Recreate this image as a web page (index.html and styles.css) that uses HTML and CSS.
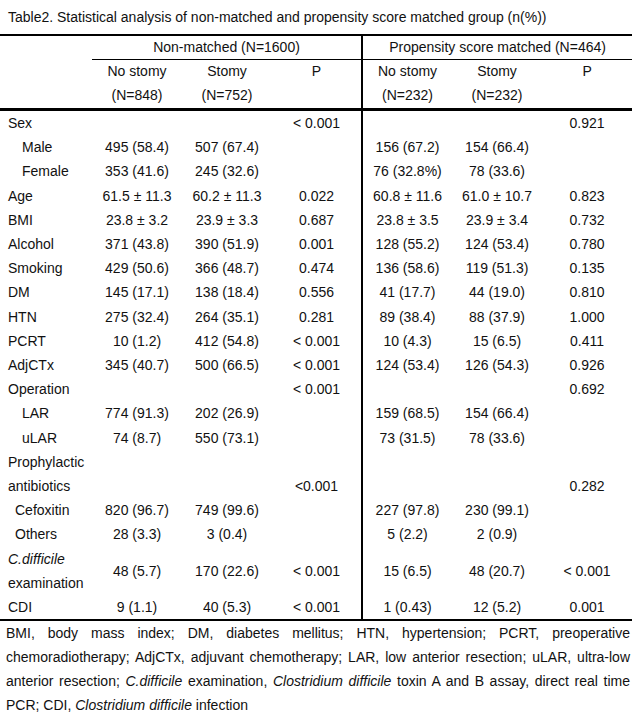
FILE: index.html
```html
<!DOCTYPE html>
<html>
<head>
<meta charset="utf-8">
<link rel="stylesheet" href="styles.css">
</head>
<body>
<div class="page">
  <div class="title">Table2. Statistical analysis of non-matched and propensity score matched group (n(%))</div>
  <table class="tbl">
    <colgroup>
      <col class="c-label"><col class="c-val"><col class="c-val"><col class="c-val"><col class="c-val"><col class="c-val"><col class="c-val">
    </colgroup>
    <thead>
      <tr class="h1">
        <th class="lbl"></th>
        <th colspan="3" class="grp sep">Non-matched (N=1600)</th>
        <th colspan="3" class="grp">Propensity score matched (N=464)</th>
      </tr>
      <tr class="h2">
        <th class="lbl"></th>
        <th>No stomy</th><th>Stomy</th><th class="sep">P</th>
        <th>No stomy</th><th>Stomy</th><th>P</th>
      </tr>
      <tr class="h3">
        <th class="lbl"></th>
        <th>(N=848)</th><th>(N=752)</th><th class="sep"></th>
        <th>(N=232)</th><th>(N=232)</th><th></th>
      </tr>
    </thead>
    <tbody>
      <tr><td class="lbl">Sex</td><td></td><td></td><td class="sep">&lt; 0.001</td><td></td><td></td><td>0.921</td></tr>
      <tr><td class="lbl in2">Male</td><td>495 (58.4)</td><td>507 (67.4)</td><td class="sep"></td><td>156 (67.2)</td><td>154 (66.4)</td><td></td></tr>
      <tr><td class="lbl in2">Female</td><td>353 (41.6)</td><td>245 (32.6)</td><td class="sep"></td><td>76 (32.8%)</td><td>78 (33.6)</td><td></td></tr>
      <tr><td class="lbl">Age</td><td>61.5 ± 11.3</td><td>60.2 ± 11.3</td><td class="sep">0.022</td><td>60.8 ± 11.6</td><td>61.0 ± 10.7</td><td>0.823</td></tr>
      <tr><td class="lbl">BMI</td><td>23.8 ± 3.2</td><td>23.9 ± 3.3</td><td class="sep">0.687</td><td>23.8 ± 3.5</td><td>23.9 ± 3.4</td><td>0.732</td></tr>
      <tr><td class="lbl">Alcohol</td><td>371 (43.8)</td><td>390 (51.9)</td><td class="sep">0.001</td><td>128 (55.2)</td><td>124 (53.4)</td><td>0.780</td></tr>
      <tr><td class="lbl">Smoking</td><td>429 (50.6)</td><td>366 (48.7)</td><td class="sep">0.474</td><td>136 (58.6)</td><td>119 (51.3)</td><td>0.135</td></tr>
      <tr><td class="lbl">DM</td><td>145 (17.1)</td><td>138 (18.4)</td><td class="sep">0.556</td><td>41 (17.7)</td><td>44 (19.0)</td><td>0.810</td></tr>
      <tr><td class="lbl">HTN</td><td>275 (32.4)</td><td>264 (35.1)</td><td class="sep">0.281</td><td>89 (38.4)</td><td>88 (37.9)</td><td>1.000</td></tr>
      <tr><td class="lbl">PCRT</td><td>10 (1.2)</td><td>412 (54.8)</td><td class="sep">&lt; 0.001</td><td>10 (4.3)</td><td>15 (6.5)</td><td>0.411</td></tr>
      <tr><td class="lbl">AdjCTx</td><td>345 (40.7)</td><td>500 (66.5)</td><td class="sep">&lt; 0.001</td><td>124 (53.4)</td><td>126 (54.3)</td><td>0.926</td></tr>
      <tr><td class="lbl">Operation</td><td></td><td></td><td class="sep">&lt; 0.001</td><td></td><td></td><td>0.692</td></tr>
      <tr><td class="lbl in2">LAR</td><td>774 (91.3)</td><td>202 (26.9)</td><td class="sep"></td><td>159 (68.5)</td><td>154 (66.4)</td><td></td></tr>
      <tr><td class="lbl in2">uLAR</td><td>74 (8.7)</td><td>550 (73.1)</td><td class="sep"></td><td>73 (31.5)</td><td>78 (33.6)</td><td></td></tr>
      <tr><td class="lbl">Prophylactic</td><td></td><td></td><td class="sep"></td><td></td><td></td><td></td></tr>
      <tr><td class="lbl">antibiotics</td><td></td><td></td><td class="sep">&lt;0.001</td><td></td><td></td><td>0.282</td></tr>
      <tr><td class="lbl in1">Cefoxitin</td><td>820 (96.7)</td><td>749 (99.6)</td><td class="sep"></td><td>227 (97.8)</td><td>230 (99.1)</td><td></td></tr>
      <tr><td class="lbl in1">Others</td><td>28 (3.3)</td><td>3 (0.4)</td><td class="sep"></td><td>5 (2.2)</td><td>2 (0.9)</td><td></td></tr>
      <tr><td class="lbl"><i>C.difficile</i><br>examination</td><td>48 (5.7)</td><td>170 (22.6)</td><td class="sep">&lt; 0.001</td><td>15 (6.5)</td><td>48 (20.7)</td><td>&lt; 0.001</td></tr>
      <tr class="last"><td class="lbl">CDI</td><td>9 (1.1)</td><td>40 (5.3)</td><td class="sep">&lt; 0.001</td><td>1 (0.43)</td><td>12 (5.2)</td><td>0.001</td></tr>
    </tbody>
  </table>
  <div class="note">
    <span class="ln">BMI, body mass index; DM, diabetes mellitus; HTN, hypertension; PCRT, preoperative</span>
    <span class="ln">chemoradiotherapy; AdjCTx, adjuvant chemotherapy; LAR, low anterior resection; uLAR, ultra-low</span>
    <span class="ln">anterior resection; <i>C.difficile</i> examination, <i>Clostridium difficile</i> toxin A and B assay, direct real time</span>
    <span class="ln end">PCR; CDI, <i>Clostridium difficile</i> infection</span>
  </div>
</div>
</body>
</html>
```
FILE: styles.css
```css
html, body {
  margin: 0;
  padding: 0;
  background: #fff;
}
body {
  font-family: "Liberation Sans", Arial, sans-serif;
  font-size: 14px;
  color: #111;
}
.page {
  width: 638px;
}
.title {
  padding: 5px 0 0 8px;
  line-height: 24px;
  height: 29px;
  white-space: nowrap;
}
.tbl {
  border-collapse: collapse;
  width: 632px;
  table-layout: fixed;
  border-top: 2px solid #000;
  border-bottom: 2px solid #000;
}
.c-label { width: 92px; }
.c-val { width: 90px; }
.tbl th, .tbl td {
  padding: 0;
  font-weight: normal;
  text-align: center;
  vertical-align: middle;
  line-height: 24.2px;
  white-space: nowrap;
}
.tbl .h1 th { height: 23px; line-height: 23px; }
.tbl .h2 th { line-height: 23px; }
.tbl .h3 th { line-height: 25px; }
.tbl .h1 .grp { border-bottom: 1px solid #000; }
.tbl .h3 th { border-bottom: 3px solid #000; }
.tbl .sep { border-right: 2px solid #000; }
.tbl .lbl {
  text-align: left;
  padding-left: 8px;
}
.tbl .lbl.in1 { padding-left: 15px; }
.tbl .lbl.in2 { padding-left: 22px; }
.note {
  padding: 0 8px 0 6px;
  line-height: 24px;
  font-family: "Liberation Sans Narrow", "Arial Narrow", "Liberation Sans", sans-serif;
  font-size: 14px;
}
.note .ln {
  display: block;
  text-align: justify;
  text-align-last: justify;
}
.note .ln.end {
  text-align-last: left;
}
```
